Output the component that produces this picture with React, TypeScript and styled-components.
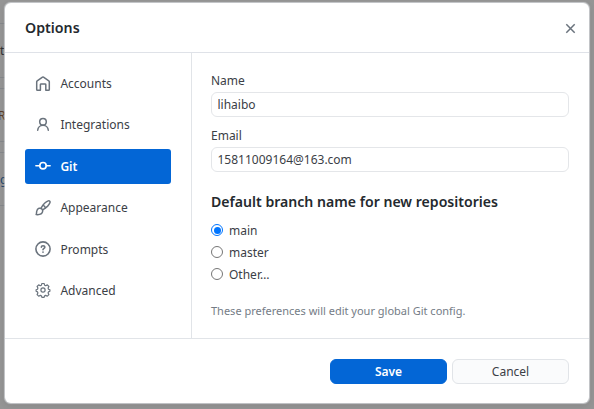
import React from 'react';
import styled, { createGlobalStyle } from 'styled-components';

const GlobalStyle = createGlobalStyle`
  * { box-sizing: border-box; }
  html, body, #root { margin: 0; height: 100%; overflow: hidden; }
  body, button, input { font-family: "Noto Sans", "Open Sans", sans-serif; font-size: 12px; color: #3b4046; }
`;

const Backdrop = styled.div`
  position: relative;
  width: 594px;
  height: 409px;
  padding: 3px 5px 6px;
  background: #959595;
`;

const BehindList = styled.div`
  position: absolute;
  left: 0;
  top: 23px;
  width: 5px;
`;

const BehindRow = styled.div<{ $gap?: number; $height: number; $shift: number; $color: string }>`
  display: flex;
  align-items: center;
  height: ${p => p.$height}px;
  margin-bottom: ${p => p.$gap ?? 0}px;
  border: solid #85888b;
  border-width: 1px 0;
  color: ${p => p.$color};
  text-indent: ${p => p.$shift}px;
`;

const Dialog = styled.section`
  position: relative;
  display: flex;
  flex-direction: column;
  width: 584px;
  height: 400px;
  background: #fff;
  border-radius: 6px;
  box-shadow: 0 0 1px 0.5px rgba(225, 228, 232, 0.7), 0 2px 7px rgba(0, 0, 0, 0.12);
`;

const Header = styled.header`
  display: flex;
  align-items: center;
  justify-content: space-between;
  height: 50px;
  padding: 1px 13px 0 20px;
  border-bottom: 1px solid #dfe2e8;
`;

const Title = styled.h1`
  margin: 0;
  font-size: 14.2px;
  line-height: 20px;
  font-weight: 600;
  color: #24292e;
`;

const Close = styled.button`
  display: flex;
  padding: 0;
  border: 0;
  background: none;
  color: #6a737d;
`;

const Body = styled.div`
  display: flex;
  height: 285px;
`;

const Sidebar = styled.nav`
  display: flex;
  flex-direction: column;
  gap: 6.4px;
  width: 187px;
  padding: 13px 20px 0;
  border-right: 1px solid #e1e4e8;
`;

const NavItem = styled.a<{ $active?: boolean }>`
  display: flex;
  flex: none;
  align-items: center;
  gap: 9.4px;
  height: 35px;
  padding-left: 10px;
  border-radius: 3px;
  font-weight: ${p => (p.$active ? 600 : 400)};
  color: ${p => (p.$active ? '#fff' : '#3b4046')};
  background: ${p => (p.$active ? '#0366d6' : 'transparent')};
  svg { color: ${p => (p.$active ? '#fff' : '#6a737d')}; }
`;

const Content = styled.form`
  flex: 1;
  padding: 19px 20px 0 19px;
`;

const Label = styled.label`
  display: block;
  height: 20px;
  line-height: 17px;
`;

const Input = styled.input`
  display: block;
  width: 358px;
  height: 25px;
  margin-bottom: 10px;
  padding: 0 5.5px;
  border: 1px solid #e4e6e9;
  border-radius: 6px;
  background: #fff;
  outline: 0;
`;

const Heading = styled.h2`
  margin: 18px 0 5px;
  font-size: 14.1px;
  line-height: 24px;
  font-weight: 600;
  color: #24292e;
`;

const Option = styled.label`
  display: flex;
  align-items: center;
  gap: 6px;
  height: 22px;
`;

const Radio = styled.span<{ $checked?: boolean }>`
  display: grid;
  place-items: center;
  width: 12px;
  height: 12px;
  border: 1px solid ${p => (p.$checked ? '#0075ff' : '#767676')};
  border-radius: 50%;
  &::after {
    content: '';
    width: 7px;
    height: 7px;
    border-radius: 50%;
    background: ${p => (p.$checked ? '#0075ff' : 'transparent')};
  }
`;

const Hint = styled.p`
  margin: 18px 0 0;
  font-size: 11px;
  line-height: 16px;
  color: #747c86;
`;

const Footer = styled.footer`
  display: flex;
  justify-content: flex-end;
  gap: 5px;
  height: 65px;
  padding: 20px 20px 0;
  border-top: 1px solid #e1e4e8;
`;

const Button = styled.button<{ $primary?: boolean }>`
  width: 117px;
  height: 25px;
  padding: 0;
  border: 1px solid ${p => (p.$primary ? '#0366d6' : '#e1e4e8')};
  border-radius: 6px;
  background: ${p => (p.$primary ? '#0366d6' : '#fafbfc')};
  color: ${p => (p.$primary ? '#fff' : '#3b4046')};
  font-weight: ${p => (p.$primary ? 600 : 400)};
`;

const Glyph = ({ children, width = 1.5 }: { children: React.ReactNode; width?: number }) => (
  <svg width="16" height="16" viewBox="0 0 16 16" fill="none" stroke="currentColor" strokeWidth={width} strokeLinecap="round" strokeLinejoin="round">
    {children}
  </svg>
);

const tabs = [
  {
    name: 'Accounts',
    icon: <Glyph><path d="M1.700 5.800Q1.700 5.300 2.200 4.900L7.500 1.200q.5-.3 1 0l5.300 3.700q.5.4.5.9v7.600a.8.8 0 0 1-.8.8h-2.700V8.600a.7.7 0 0 0-.7-.7H6.100a.7.7 0 0 0-.7.7v5.600H2.500a.8.8 0 0 1-.8-.8z" /></Glyph>,
  },
  {
    name: 'Integrations',
    icon: <Glyph><circle cx="8" cy="4.700" r="3.300" /><path d="M2.700 13.300c.2-2.900 2.400-5.100 5.300-5.100s5.100 2.200 5.300 5.100" /></Glyph>,
  },
  { name: 'Git', icon: <Glyph width={1.6}><circle cx="8" cy="7.700" r="3.200" /><path d="M.9 7.700h3.700M11.400 7.700h3.700" /></Glyph> },
  {
    name: 'Appearance',
    icon: (
      <Glyph>
        <path d="M6.200 7.800C8 4.700 11 1.700 13.200.9c1.400-.4 2.200.5 1.700 1.900-.8 2.300-3.700 5-6.800 6.900" />
        <path d="M8.200 5.400c1 .4 1.800 1.200 2.200 2.300M4 8.300c2.200-.7 4.200 1.200 3.600 3.400-.5 2.400-3.500 3.200-6.500 2.900.7-1 .3-1.800.6-3.300C2 9.800 2.700 8.700 4 8.300z" />
      </Glyph>
    ),
  },
  {
    name: 'Prompts',
    icon: <Glyph width={1.6}><circle cx="8" cy="8" r="7.100" /><path d="M6.300 6.200c.1-1 .8-1.500 1.700-1.500 1 0 1.800.6 1.800 1.500C9.800 7.400 8 7.300 8 8.800" /><path d="M8 11.100v.1" /></Glyph>,
  },
  {
    name: 'Advanced',
    icon: (
      <Glyph width={1.200}>
        <circle cx="8" cy="8" r="2.100" />
        <path d="M6.900 1.500h2.200l.5 1.700 1.100.5 1.600-.8 1.600 1.600-.8 1.600.4 1.100 1.400.5v1.600l-1.400.6-.4 1.100.8 1.600-1.600 1.600-1.600-.8-1.100.4-.5 1.500H6.900l-.5-1.500-1.100-.4-1.600.8-1.600-1.600.8-1.600-.4-1.100-1.400-.6V7.700l1.400-.5.4-1.100-.8-1.600 1.600-1.600 1.600.8 1.100-.5z" />
      </Glyph>
    ),
  },
];

export default function App() {
  return (
    <>
      <GlobalStyle />
      <Backdrop>
        <BehindList>
          <BehindRow $height={55} $gap={10} $shift={0} $color="#303234">t</BehindRow>
          <BehindRow $height={54} $gap={10} $shift={-2} $color="#5a3d28">R</BehindRow>
          <BehindRow $height={54} $shift={0} $color="#24476c">g</BehindRow>
        </BehindList>
        <Dialog>
          <Header>
            <Title>Options</Title>
            <Close type="button" aria-label="Close">
              <svg width="11" height="11" viewBox="0 0 11 11" fill="none" stroke="currentColor" strokeWidth="1.500">
                <path d="M1.300 1.300l8.400 8.400M9.700 1.300l-8.400 8.400" />
              </svg>
            </Close>
          </Header>
          <Body>
            <Sidebar>
              {tabs.map(({ name, icon }) => (
                <NavItem key={name} $active={name === 'Git'}>
                  {icon}
                  {name}
                </NavItem>
              ))}
            </Sidebar>
            <Content>
              <Label>Name</Label>
              <Input defaultValue="lihaibo" />
              <Label>Email</Label>
              <Input defaultValue="15811009164@163.com" />
              <Heading>Default branch name for new repositories</Heading>
              <Option><Radio $checked />main</Option>
              <Option><Radio />master</Option>
              <Option><Radio />Other…</Option>
              <Hint>These preferences will edit your global Git config.</Hint>
            </Content>
          </Body>
          <Footer>
            <Button type="button" $primary>Save</Button>
            <Button type="button">Cancel</Button>
          </Footer>
        </Dialog>
      </Backdrop>
    </>
  );
}
